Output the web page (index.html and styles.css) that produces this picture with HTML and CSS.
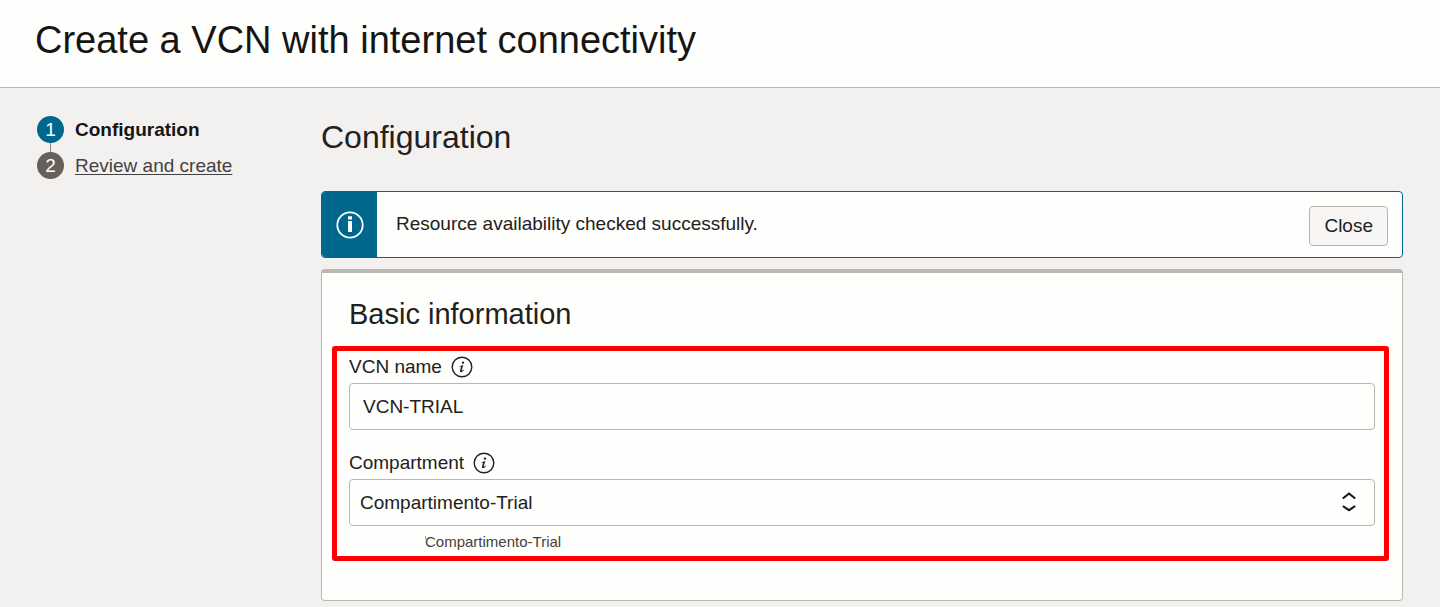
FILE: index.html
```html
<!DOCTYPE html>
<html lang="en">
<head>
<meta charset="utf-8">
<meta name="viewport" content="width=device-width, initial-scale=1">
<title>Create a VCN with internet connectivity</title>
<link rel="stylesheet" href="styles.css">
</head>
<body>
<header class="page-header">
  <h1 class="page-title">Create a VCN with internet connectivity</h1>
</header>
<div class="workspace">
  <nav class="steps" aria-label="Steps">
    <ol class="step-list">
      <li class="step step-current" aria-current="step"><span class="step-number">1</span><span class="step-label">Configuration</span></li>
      <li class="step"><span class="step-number">2</span><a class="step-label" href="#review">Review and create</a></li>
    </ol>
  </nav>
  <main class="content">
    <h2 class="section-title">Configuration</h2>
    <div class="alert" role="status">
      <div class="alert-icon">
        <svg width="28" height="28" viewBox="0 0 28 28" aria-hidden="true">
          <circle cx="14" cy="14" r="12.7" fill="none" stroke="#fff" stroke-width="1.8"/>
          <path d="M12 5.2h4v3.3h-4zM12 10h4v11h-4z" fill="#fff"/>
        </svg>
      </div>
      <p class="alert-text">Resource availability checked successfully.</p>
      <button class="close-button" type="button">Close</button>
    </div>
    <section class="card">
      <h3 class="card-title">Basic information</h3>
      <form class="highlight">
        <div class="field">
          <div class="label-row">
            <label for="vcn-name">VCN name</label>
            <svg class="info" width="22" height="22" viewBox="0 0 22 22" aria-hidden="true">
              <circle cx="11" cy="11" r="9.8" fill="none" stroke="#222" stroke-width="1.4"/>
              <circle cx="12" cy="6.6" r="1.2" fill="#222"/>
              <path d="M8.4 10.3l3.9-1.3-1.6 5.4c-.2.7.4.6 1.9-.8l.4.4c-1.4 1.9-2.6 2.4-3.5 2.1-.8-.3-.7-1-.5-1.7l1.1-3.9-1.6.3z" fill="#222"/>
            </svg>
          </div>
          <input class="control text-input" id="vcn-name" type="text" value="VCN-TRIAL">
        </div>
        <div class="field">
          <div class="label-row">
            <label for="compartment">Compartment</label>
            <svg class="info" width="22" height="22" viewBox="0 0 22 22" aria-hidden="true">
              <circle cx="11" cy="11" r="9.8" fill="none" stroke="#222" stroke-width="1.4"/>
              <circle cx="12" cy="6.6" r="1.2" fill="#222"/>
              <path d="M8.4 10.3l3.9-1.3-1.6 5.4c-.2.7.4.6 1.9-.8l.4.4c-1.4 1.9-2.6 2.4-3.5 2.1-.8-.3-.7-1-.5-1.7l1.1-3.9-1.6.3z" fill="#222"/>
            </svg>
          </div>
          <div class="select-wrap">
            <select class="control select" id="compartment"><option>Compartimento-Trial</option></select>
            <svg class="select-arrows" width="14" height="20" viewBox="0 0 14 20" aria-hidden="true">
              <path d="M.8 6.5l6.2-5 6.2 5M.8 14L7 18.2l6.2-4.2" fill="none" stroke="#161513" stroke-width="2.1"/>
            </svg>
          </div>
          <p class="hint">Compartimento-Trial</p>
        </div>
      </form>
    </section>
  </main>
</div>
</body>
</html>
```
FILE: styles.css
```css
* {
  box-sizing: border-box;
}

body {
  margin: 0;
  background: #f3f1f0;
  color: #222120;
  font: 19px/24px "Liberation Sans", Arial, sans-serif;
}

h1, h2, h3, p, ol {
  margin: 0;
  padding: 0;
  font-weight: 400;
}

.page-header {
  padding: 16px 35px 23px;
  background: #fefefc;
  border-bottom: 1px solid #b9b6b2;
}

.page-title {
  font-size: 38px;
  line-height: 48px;
  color: #161513;
}

.workspace {
  display: grid;
  grid-template-columns: 248px minmax(0, 1fr);
  gap: 36px;
  padding: 28px 37px 6px;
}

.step-list {
  display: flex;
  flex-direction: column;
  gap: 9px;
  list-style: none;
}

.step {
  position: relative;
  display: flex;
  align-items: center;
  gap: 11px;
  color: #444240;
}

.step-number {
  width: 27px;
  height: 27px;
  border-radius: 50%;
  background: #665f5b;
  color: #fff;
  line-height: 27px;
  text-align: center;
}

.step-current {
  color: #161513;
  font-weight: 700;
}

.step-current .step-number {
  background: #00688c;
  font-weight: 400;
}

.step-current::after {
  content: "";
  position: absolute;
  top: 100%;
  left: 13px;
  width: 1px;
  height: 9px;
  background: #8b8580;
}

a.step-label {
  color: inherit;
  text-decoration-thickness: 1px;
  text-underline-offset: 2px;
}

.section-title {
  margin-bottom: 32px;
  font-size: 32px;
  line-height: 43px;
}

.alert {
  display: flex;
  align-items: center;
  min-height: 67px;
  margin-bottom: 11px;
  padding-right: 14px;
  overflow: hidden;
  background: #fefefc;
  border: 1px solid #00688c;
  border-radius: 4px;
}

.alert-icon {
  display: grid;
  place-items: center;
  align-self: stretch;
  width: 55px;
  background: #00688c;
}

.alert-text {
  flex: 1;
  padding: 0 0 2px 19px;
}

.close-button {
  height: 40px;
  margin-top: 2px;
  padding: 0 14px;
  background: #f7f6f5;
  border: 1px solid #b9b3af;
  border-radius: 4px;
  color: #222120;
  font: inherit;
}

.card {
  padding: 23px 13px 39px 10px;
  background: #fefefc;
  border: 1px solid #bbb7b0;
  border-top-width: 4px;
  border-radius: 4px;
}

.card-title {
  margin-bottom: 14px;
  padding-left: 17px;
  font-size: 29px;
  line-height: 36px;
}

.highlight {
  display: flex;
  flex-direction: column;
  gap: 17px;
  padding: 0 9px 0 12px;
  border: 5px solid #f00;
  border-radius: 3px;
}

.label-row {
  display: flex;
  align-items: center;
  gap: 9px;
  height: 32px;
}

.control {
  display: block;
  width: 100%;
  height: 47px;
  padding: 0 13px;
  appearance: none;
  background: #fefefc;
  border: 1px solid #b9b6b2;
  border-radius: 4px;
  color: inherit;
  font: inherit;
}

.select-wrap {
  position: relative;
}

.select {
  padding: 0 10px;
}

.select-arrows {
  position: absolute;
  top: 13px;
  right: 19px;
  pointer-events: none;
}

.hint {
  position: relative;
  padding: 2px 0 0 76px;
  font-size: 15px;
  line-height: 28px;
  color: #444240;
}

.hint::before {
  content: "";
  position: absolute;
  top: 10px;
  left: 76px;
  width: 1px;
  height: 3px;
  background: #aaa8a6;
}
```
